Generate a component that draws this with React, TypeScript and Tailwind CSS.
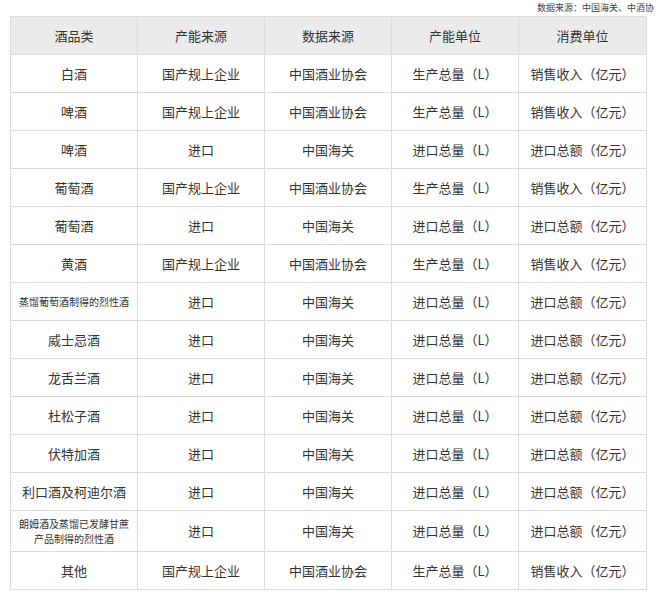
import React from 'react';

type Row = {
  name: string;
  small?: boolean;
  tall?: boolean;
  source: string;
  data: string;
  prod: string;
  cons: string;
};

const domestic = { source: '国产规上企业', data: '中国酒业协会', prod: '生产总量（L）', cons: '销售收入（亿元）' };
const imported = { source: '进口', data: '中国海关', prod: '进口总量（L）', cons: '进口总额（亿元）' };

const rows: Row[] = [
  { name: '白酒', ...domestic },
  { name: '啤酒', ...domestic },
  { name: '啤酒', ...imported },
  { name: '葡萄酒', ...domestic },
  { name: '葡萄酒', ...imported },
  { name: '黄酒', ...domestic },
  { name: '蒸馏葡萄酒制得的烈性酒', small: true, ...imported },
  { name: '威士忌酒', ...imported },
  { name: '龙舌兰酒', ...imported },
  { name: '杜松子酒', ...imported },
  { name: '伏特加酒', ...imported },
  { name: '利口酒及柯迪尔酒', ...imported },
  { name: '朗姆酒及蒸馏已发酵甘蔗\n产品制得的烈性酒', small: true, tall: true, ...imported },
  { name: '其他', ...domestic },
];

const headers = ['酒品类', '产能来源', '数据来源', '产能单位', '消费单位'];

export default function App() {
  return (
    <div
      className="w-[660px] h-[595px] bg-white text-[#333] relative"
      style={{ fontFamily: '"Noto Sans CJK SC", "Noto Sans", sans-serif' }}
    >
      {/* 数据来源 */}
      <div className="h-4 flex justify-end pr-[6px]">
        <span className="text-[9px] leading-4 text-[#444] whitespace-nowrap">
          数据来源：中国海关、中酒协
        </span>
      </div>

      <div className="ml-[10px] w-[636px] border-l border-t border-[#dcdcdc]">
        <div className="grid grid-cols-[127px_127px_127px_127px_128px] h-[38px] bg-[#ebebeb]">
          {headers.map((h) => (
            <div
              key={h}
              className="flex items-center justify-center border-r border-b border-[#dcdcdc] text-[13px]"
            >
              {h}
            </div>
          ))}
        </div>
        {rows.map((r, i) => (
          <div
            key={i}
            className={`grid grid-cols-[127px_127px_127px_127px_128px] ${r.tall ? 'h-[41px]' : 'h-[38px]'}`}
          >
            <div
              className={`flex items-center justify-center text-center whitespace-pre-line border-r border-b border-[#dcdcdc] ${
                r.small ? 'text-[10px] leading-[15px]' : 'text-[13px]'
              }`}
            >
              {r.name}
            </div>
            {[r.source, r.data, r.prod, r.cons].map((c, j) => (
              <div
                key={j}
                className="flex items-center justify-center border-r border-b border-[#dcdcdc] text-[13px]"
              >
                {c}
              </div>
            ))}
          </div>
        ))}
      </div>
    </div>
  );
}
